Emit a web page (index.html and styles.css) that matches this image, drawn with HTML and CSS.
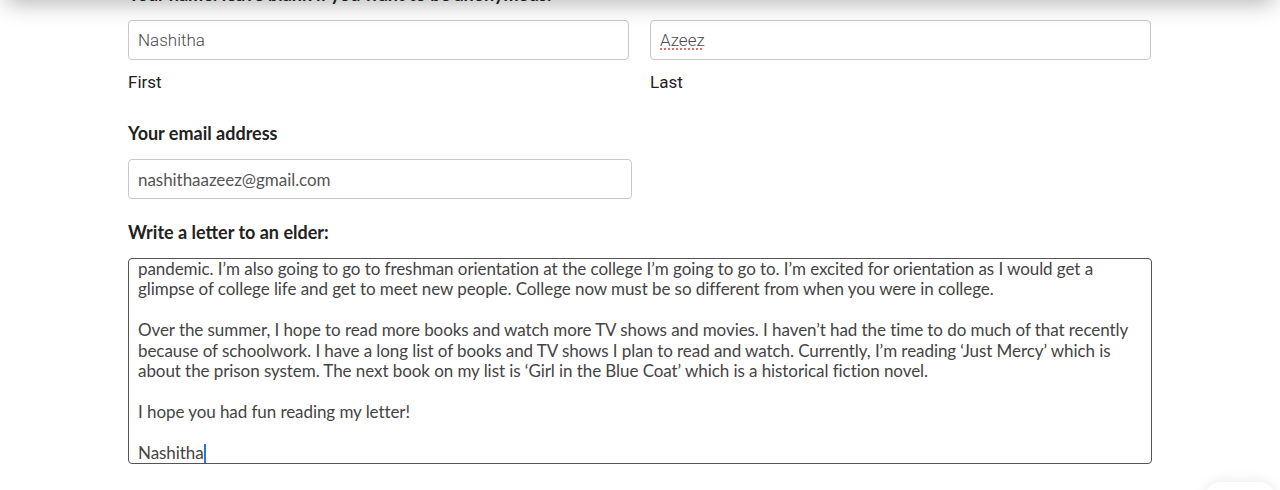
FILE: index.html
```html
<!DOCTYPE html>
<html lang="en">
<head>
<meta charset="utf-8">
<title>Letter to an elder</title>
<link rel="stylesheet" href="styles.css">
</head>
<body>
<div class="topbar"></div>
<main class="form">
  <div class="label cut">Your name: leave blank if you want to be anonymous.</div>
  <div class="name-row">
    <div class="name-col">
      <div class="field name">Nashitha</div>
      <div class="sublabel">First</div>
    </div>
    <div class="name-col">
      <div class="field name"><span class="spell">Azeez</span></div>
      <div class="sublabel">Last</div>
    </div>
  </div>
  <div class="label email-label">Your email address</div>
  <div class="field email">nashithaazeez@gmail.com</div>
  <div class="label letter-label">Write a letter to an elder:</div>
  <div class="textarea" role="textbox" aria-multiline="true">
    <div class="line">pandemic. I’m also going to go to freshman orientation at the college I’m going to go to. I’m excited for orientation as I would get a</div>
    <div class="line">glimpse of college life and get to meet new people. College now must be so different from when you were in college.</div>
    <div class="line">&nbsp;</div>
    <div class="line">Over the summer, I hope to read more books and watch more TV shows and movies. I haven’t had the time to do much of that recently</div>
    <div class="line">because of schoolwork. I have a long list of books and TV shows I plan to read and watch. Currently, I’m reading ‘Just Mercy’ which is</div>
    <div class="line">about the prison system. The next book on my list is ‘Girl in the Blue Coat’ which is a historical fiction novel.</div>
    <div class="line">&nbsp;</div>
    <div class="line">I hope you had fun reading my letter!</div>
    <div class="line">&nbsp;</div>
    <div class="line">Nashitha<span class="caret"></span></div>
  </div>
</main>
<div class="widget"></div>
</body>
</html>
```
FILE: styles.css
```css
html, body {
  margin: 0;
  padding: 0;
  background: #ffffff;
  overflow: hidden;
}
body {
  font-family: "Lato", "Open Sans", sans-serif;
  color: #222;
  height: 490px;
}
.topbar {
  position: fixed;
  top: -60px;
  left: 10px;
  right: 10px;
  height: 60px;
  background: #fff;
  box-shadow: 0 0 22px 4px rgba(0, 0, 0, 0.28);
  z-index: 5;
}
.widget {
  position: fixed;
  right: 6px;
  bottom: -30px;
  width: 68px;
  height: 38px;
  border-radius: 14px;
  background: #fff;
  box-shadow: 0 0 14px rgba(0, 0, 0, 0.10);
}
.form {
  width: 1024px;
  padding-left: 128px;
  display: flex;
  flex-direction: column;
}
.label {
  font-weight: 700;
  font-size: 18px;
  line-height: 20px;
  color: #222;
}
.cut {
  margin-top: -16px;
}
.name-row {
  display: flex;
  gap: 21px;
  margin-top: 16px;
  width: 1023px;
}
.name-col {
  flex: 1;
  display: flex;
  flex-direction: column;
}
.field {
  box-sizing: border-box;
  height: 40px;
  border: 1px solid #c8c8c8;
  border-radius: 4px;
  padding: 0 9px;
  display: flex;
  align-items: center;
  font-size: 17px;
  color: #555;
  background: #fff;
}
.name {
  font-family: "Roboto", "Liberation Sans", sans-serif;
  font-weight: 300;
  font-size: 17px;
  color: #4a4a4a;
}
.spell {
  text-decoration: underline dotted #d9534f;
  text-underline-offset: 3px;
}
.sublabel {
  font-family: "Roboto", "Liberation Sans", sans-serif;
  font-size: 17px;
  line-height: 20px;
  color: #222;
  margin-top: 12px;
}
.email-label {
  margin-top: 31px;
}
.email {
  margin-top: 16px;
  width: 504px;
  color: #555;
  letter-spacing: -0.05px;
}
.letter-label {
  margin-top: 23px;
}
.textarea {
  box-sizing: border-box;
  margin-top: 16px;
  width: 1024px;
  height: 206px;
  border: 1.5px solid #555;
  border-radius: 4px;
  padding: 0 9px;
  font-size: 17px;
  line-height: 20.4px;
  letter-spacing: -0.07px;
  color: #444;
  overflow: hidden;
}
.line {
  white-space: pre;
}
.caret {
  display: inline-block;
  width: 2px;
  height: 19px;
  background: #3370e0;
  vertical-align: -4px;
}
```
